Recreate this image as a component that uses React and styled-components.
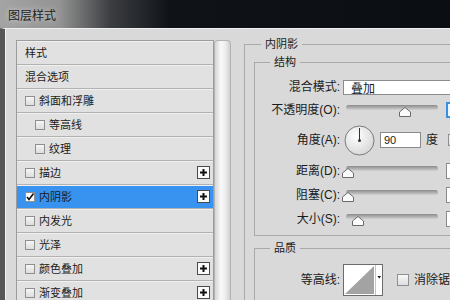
import React from 'react';
import styled, { createGlobalStyle } from 'styled-components';

const Global = createGlobalStyle`
  html, body {
    margin: 0;
    padding: 0;
    background: #0b0f14;
  }
  body {
    font-family: "Liberation Sans", "Noto Sans CJK SC", sans-serif;
    color: #1b1b1b;
  }
`;

const Window = styled.div`
  width: 450px;
  height: 300px;
  overflow: hidden;
  display: flex;
  flex-direction: column;
`;

const TitleBar = styled.div`
  height: 28px;
  flex-shrink: 0;
  display: flex;
  align-items: center;
  padding-left: 8px;
  font-size: 12px;
  color: #1e1e1e;
  text-shadow: 0 0 6px rgba(255, 255, 255, 0.7);
  background: linear-gradient(90deg, #a4a4a4 0px, #939393 60px, #3c3e41 110px, #0f1318 170px, #0b0f14 100%);
`;

const Body = styled.div`
  flex: 1;
  display: flex;
  background: #d9d9d9;
  border-top: 1px solid #efefef;
  border-left: 5px solid #565656;
  box-shadow: inset 1px 0 0 #f2f2f2;
  padding: 8px 0 0 11px;
  min-height: 0;
`;

const LeftColumn = styled.div`
  display: flex;
  flex-shrink: 0;
  margin-right: 13px;
`;

const List = styled.div`
  width: 196px;
  margin-top: 3px;
  align-self: flex-start;
  border: 1px solid #9c9c9c;
  background: #e1e1e1;
`;

const Row = styled.div`
  height: 23px;
  display: flex;
  align-items: center;
  padding-left: ${(p) => (p.$indent ? 18 : 8)}px;
  padding-right: 3px;
  font-size: 11px;
  line-height: 14px;
  border-bottom: 1px solid #b2b2b2;
  box-shadow: inset 0 1px 0 #f0f0f0;
  background: ${(p) => (p.$active ? '#3793ef' : 'transparent')};
`;

const Box = styled.span`
  width: 8px;
  height: 8px;
  flex-shrink: 0;
  display: inline-flex;
  align-items: center;
  justify-content: center;
  margin-right: 4px;
  border: 1px solid #8f8f8f;
  background: ${(p) => (p.$checked ? '#ffffff' : 'linear-gradient(#f6f6f6, #dcdcdc)')};
`;

const Plus = styled.span`
  margin-left: auto;
  width: 11px;
  height: 11px;
  display: inline-flex;
  align-items: center;
  justify-content: center;
  border: 1px solid #4a4a4a;
  background: #fafafa;
`;

const Scroll = styled.div`
  width: 15px;
  margin-top: 3px;
  border: 1px solid #b3b3b3;
  border-bottom: none;
  border-radius: 4px 4px 0 0;
  background: linear-gradient(90deg, #d6d6d6, #f9f9f9 40%, #ececec 70%, #d0d0d0);
`;

const RightColumn = styled.div`
  width: 260px;
  flex-shrink: 0;
`;

const Group = styled.fieldset`
  margin: ${(p) => p.$mt || 0}px 0 0 0;
  padding: 0 0 0 ${(p) => p.$pl || 0}px;
  border: 1px solid #a9a9a9;
  min-width: 0;
`;

const Legend = styled.legend`
  font-size: 11px;
  line-height: 14px;
  padding: 0 4px;
  margin-left: ${(p) => p.$ml}px;
`;

const Form = styled.div`
  display: flex;
  flex-direction: column;
  gap: 8px;
  padding: ${(p) => p.$pt}px 0 ${(p) => p.$pb}px 0;
`;

const Field = styled.div`
  display: flex;
  align-items: center;
  height: ${(p) => p.$h || 16}px;
`;

const Label = styled.span`
  width: 85px;
  flex-shrink: 0;
  margin-right: 3px;
  text-align: right;
  font-size: 12px;
  line-height: 14px;
  white-space: nowrap;
`;

const Select = styled.div`
  width: 130px;
  height: 13px;
  flex-shrink: 0;
  padding-left: 7px;
  display: flex;
  align-items: center;
  font-size: 12px;
  background: #ffffff;
  border: 1px solid #8c8c8c;
`;

const Slider = styled.div`
  position: relative;
  width: 92px;
  height: 14px;
  margin-left: 3px;
  flex-shrink: 0;
`;

const Track = styled.div`
  margin-top: 2px;
  height: 5px;
  border-radius: 3px;
  background: linear-gradient(#8a8a8a, #b5b5b5 60%, #d2d2d2);
`;

const Thumb = styled.svg`
  position: absolute;
  top: 4px;
  transform: translateX(-50%);
`;

const NumBox = styled.div`
  width: 36px;
  height: ${(p) => (p.$focus ? 12 : 14)}px;
  flex-shrink: 0;
  margin-left: ${(p) => p.$ml || 8}px;
  padding-left: 3px;
  display: flex;
  align-items: center;
  font-size: 11px;
  background: ${(p) => (p.$focus ? '#eef6ff' : '#ffffff')};
  border: ${(p) => (p.$focus ? '2px solid #3b8fe0' : '1px solid #8a8a8a')};
`;

const Unit = styled.span`
  margin-left: 5px;
  font-size: 12px;
  line-height: 14px;
`;

const Tick = styled.span`
  width: 10px;
  height: 10px;
  flex-shrink: 0;
  margin-left: ${(p) => p.$ml}px;
  border: 1px solid #8f8f8f;
  background: linear-gradient(#f8f8f8, #dedede);
`;

const TickText = styled.span`
  margin-left: 5px;
  font-size: 12px;
  line-height: 14px;
  white-space: nowrap;
`;

const layers = [
  { name: '样式', box: false },
  { name: '混合选项', box: false },
  { name: '斜面和浮雕', box: true },
  { name: '等高线', box: true, indent: true },
  { name: '纹理', box: true, indent: true },
  { name: '描边', box: true, plus: true },
  { name: '内阴影', box: true, plus: true, checked: true, active: true },
  { name: '内发光', box: true },
  { name: '光泽', box: true },
  { name: '颜色叠加', box: true, plus: true },
  { name: '渐变叠加', box: true, plus: true },
];

const sliders = [
  { label: '距离(D):', pct: 2 },
  { label: '阻塞(C):', pct: 2 },
  { label: '大小(S):', pct: 13 },
];

function SliderCtl({ pct }) {
  return (
    <Slider>
      <Track />
      <Thumb width="12" height="10" viewBox="0 0 12 10" style={{ left: `${pct}%` }}>
        <path d="M6 0.5 L11.5 5 L11.5 9.5 L0.5 9.5 L0.5 5 Z" fill="#fbfbfb" stroke="#6a6a6a" />
      </Thumb>
    </Slider>
  );
}

function Dial() {
  return (
    <svg width="31" height="31" viewBox="0 0 31 31" style={{ marginLeft: 1, flexShrink: 0 }}>
      <defs>
        <radialGradient id="dialFill" cx="40%" cy="35%" r="70%">
          <stop offset="0" stopColor="#ffffff" />
          <stop offset="1" stopColor="#d6d6d6" />
        </radialGradient>
      </defs>
      <circle cx="15.5" cy="15.5" r="14.5" fill="url(#dialFill)" stroke="#7b7b7b" />
      <line x1="15.5" y1="15.5" x2="15.5" y2="3" stroke="#333" strokeWidth="1" />
      <circle cx="15.5" cy="15.5" r="1.5" fill="#333" />
    </svg>
  );
}

function Contour() {
  return (
    <svg width="40" height="32" viewBox="0 0 40 32" style={{ flexShrink: 0 }}>
      <rect x="0.5" y="0.5" width="39" height="31" fill="#ffffff" stroke="#6c6c6c" />
      <polygon points="2,30 31,2 31,30" fill="#a3a3a3" />
      <line x1="32.5" y1="1" x2="32.5" y2="31" stroke="#c4c4c4" />
      <polygon points="34.5,12 38,12 36.25,14.5" fill="#111" />
    </svg>
  );
}

export default function App() {
  return (
    <Window>
      <Global />
      <TitleBar>图层样式</TitleBar>
      <Body>
        <LeftColumn>
          <List>
            {layers.map((l) => (
              <Row key={l.name} $indent={l.indent} $active={l.active}>
                {l.box && (
                  <Box $checked={l.checked}>
                    {l.checked && (
                      <svg width="8" height="8" viewBox="0 0 8 8">
                        <path d="M1 4 L3 6.5 L7.5 0.5" fill="none" stroke="#111" strokeWidth="1.6" />
                      </svg>
                    )}
                  </Box>
                )}
                {l.name}
                {l.plus && (
                  <Plus>
                    <svg width="9" height="9" viewBox="0 0 9 9">
                      <path d="M4.5 1 V8 M1 4.5 H8" stroke="#111" strokeWidth="2" />
                    </svg>
                  </Plus>
                )}
              </Row>
            ))}
          </List>
          <Scroll />
        </LeftColumn>

        <RightColumn>
          <Group $pl={9}>
            <Legend $ml={7}>内阴影</Legend>
            <Group $mt={4}>
              <Legend $ml={15}>结构</Legend>
              <Form $pt={10} $pb={8}>
                <Field>
                  <Label>混合模式:</Label>
                  <Select>叠加</Select>
                </Field>
                <Field $h={14}>
                  <Label>不透明度(O):</Label>
                  <SliderCtl pct={64} />
                  <NumBox $focus>75</NumBox>
                </Field>
                <Field $h={30}>
                  <Label>角度(A):</Label>
                  <Dial />
                  <NumBox $ml={5}>90</NumBox>
                  <Unit>度</Unit>
                  <Tick $ml={10} />
                </Field>
                {sliders.map((s) => (
                  <Field key={s.label}>
                    <Label>{s.label}</Label>
                    <SliderCtl pct={s.pct} />
                    <NumBox>0</NumBox>
                  </Field>
                ))}
              </Form>
            </Group>
            <Group $mt={5}>
              <Legend $ml={15}>品质</Legend>
              <Form $pt={9} $pb={10}>
                <Field $h={32}>
                  <Label>等高线:</Label>
                  <Contour />
                  <Tick $ml={14} />
                  <TickText>消除锯齿</TickText>
                </Field>
              </Form>
            </Group>
          </Group>
        </RightColumn>
      </Body>
    </Window>
  );
}
